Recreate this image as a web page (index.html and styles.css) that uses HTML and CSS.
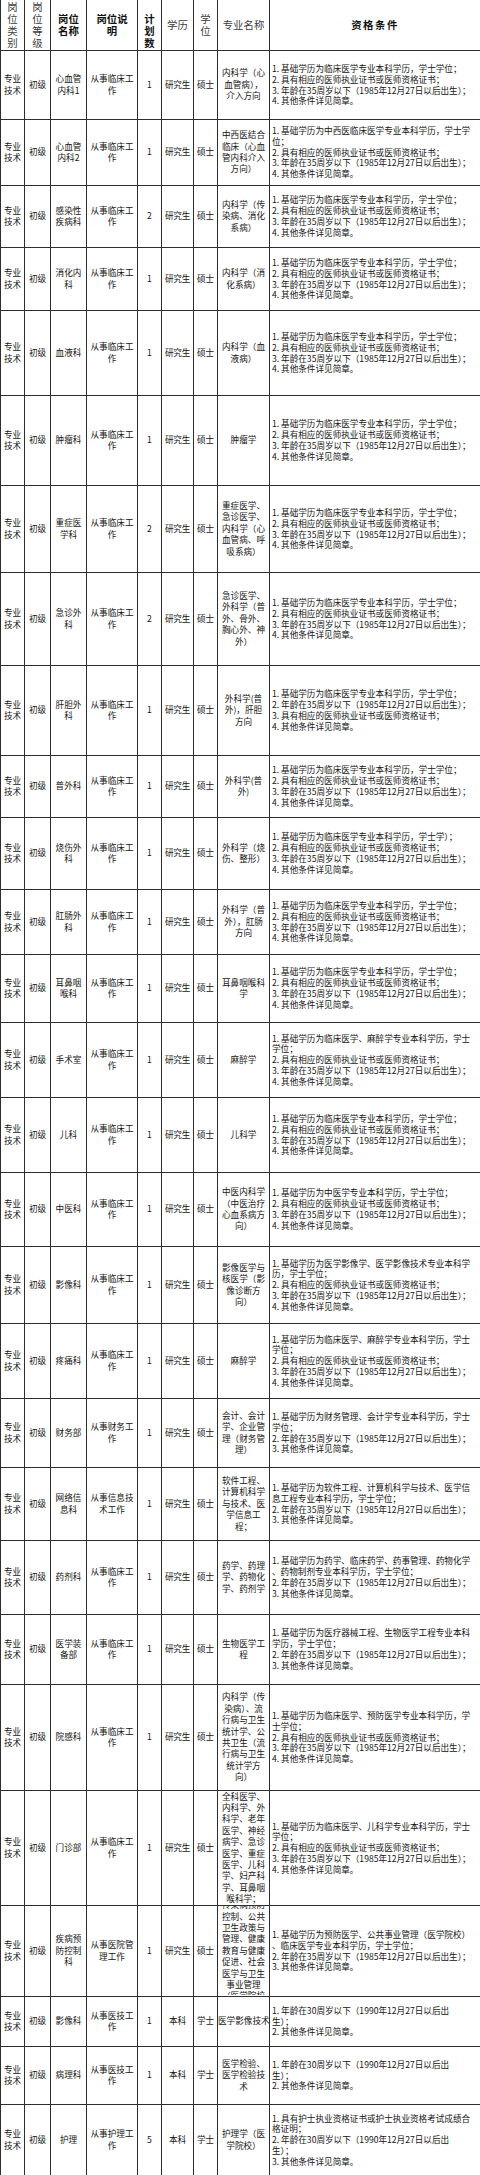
FILE: index.html
```html
<!DOCTYPE html>
<html lang="zh-CN">
<head>
<meta charset="utf-8">
<title>岗位表</title>
<link rel="stylesheet" href="styles.css">
</head>
<body>
<table class="sheet">
  <colgroup>
    <col class="w-type"><col class="w-level"><col class="w-name"><col class="w-desc"><col class="w-num"><col class="w-edu"><col class="w-deg"><col class="w-major"><col class="w-req">
  </colgroup>
  <thead>
    <tr class="r50">
      <th>岗<br>位<br>类<br>别</th>
      <th>岗<br>位<br>等<br>级</th>
      <th class="b">岗位<br>名称</th>
      <th class="b">岗位说<br>明</th>
      <th class="b low">计<br>划<br>数</th>
      <th>学历</th>
      <th>学<br>位</th>
      <th>专业名称</th>
      <th class="b wide">资格条件</th>
    </tr>
  </thead>
  <tbody>
    <tr class="r69">
      <td>专业<br>技术</td><td>初级</td><td>心血管<br>内科1</td><td>从事临床工<br>作</td><td>1</td><td class="edu">研究生</td><td>硕士</td>
      <td>内科学（心<br>血管病），<br>介入方向</td>
      <td class="req">1. 基础学历为临床医学专业本科学历，学士学位；<br>2. 具有相应的医师执业证书或医师资格证书；<br>3. 年龄在35周岁以下（1985年12月27日以后出生）；<br>4. 其他条件详见简章。</td>
    </tr>
    <tr class="r66">
      <td>专业<br>技术</td><td>初级</td><td>心血管<br>内科2</td><td>从事临床工<br>作</td><td>1</td><td class="edu">研究生</td><td>硕士</td>
      <td>中西医结合<br>临床（心血<br>管内科介入<br>方向）</td>
      <td class="req">1. 基础学历为中西医临床医学专业本科学历，学士学<br>位；<br>2. 具有相应的医师执业证书或医师资格证书；<br>3. 年龄在35周岁以下（1985年12月27日以后出生）；<br>4. 其他条件详见简章。</td>
    </tr>
    <tr class="r62">
      <td>专业<br>技术</td><td>初级</td><td>感染性<br>疾病科</td><td>从事临床工<br>作</td><td>2</td><td class="edu">研究生</td><td>硕士</td>
      <td>内科学（传<br>染病、消化<br>系病）</td>
      <td class="req">1. 基础学历为临床医学专业本科学历，学士学位；<br>2. 具有相应的医师执业证书或医师资格证书；<br>3. 年龄在35周岁以下（1985年12月27日以后出生）；<br>4. 其他条件详见简章。</td>
    </tr>
    <tr class="r63">
      <td>专业<br>技术</td><td>初级</td><td>消化内<br>科</td><td>从事临床工<br>作</td><td>1</td><td class="edu">研究生</td><td>硕士</td>
      <td>内科学（消<br>化系病）</td>
      <td class="req">1. 基础学历为临床医学专业本科学历，学士学位；<br>2. 具有相应的医师执业证书或医师资格证书；<br>3. 年龄在35周岁以下（1985年12月27日以后出生）；<br>4. 其他条件详见简章。</td>
    </tr>
    <tr class="r85">
      <td>专业<br>技术</td><td>初级</td><td>血液科</td><td>从事临床工<br>作</td><td>1</td><td class="edu">研究生</td><td>硕士</td>
      <td>内科学（血<br>液病）</td>
      <td class="req">1. 基础学历为临床医学专业本科学历，学士学位；<br>2. 具有相应的医师执业证书或医师资格证书；<br>3. 年龄在35周岁以下（1985年12月27日以后出生）；<br>4. 其他条件详见简章。</td>
    </tr>
    <tr class="r90">
      <td>专业<br>技术</td><td>初级</td><td>肿瘤科</td><td>从事临床工<br>作</td><td>1</td><td class="edu">研究生</td><td>硕士</td>
      <td>肿瘤学</td>
      <td class="req">1. 基础学历为临床医学专业本科学历，学士学位；<br>2. 具有相应的医师执业证书或医师资格证书；<br>3. 年龄在35周岁以下（1985年12月27日以后出生）；<br>4. 其他条件详见简章。</td>
    </tr>
    <tr class="r87">
      <td>专业<br>技术</td><td>初级</td><td>重症医<br>学科</td><td>从事临床工<br>作</td><td>2</td><td class="edu">研究生</td><td>硕士</td>
      <td>重症医学、<br>急诊医学、<br>内科学（心<br>血管病、呼<br>吸系病）</td>
      <td class="req">1. 基础学历为临床医学专业本科学历，学士学位；<br>2. 具有相应的医师执业证书或医师资格证书；<br>3. 年龄在35周岁以下（1985年12月27日以后出生）；<br>4. 其他条件详见简章。</td>
    </tr>
    <tr class="r93">
      <td>专业<br>技术</td><td>初级</td><td>急诊外<br>科</td><td>从事临床工<br>作</td><td>2</td><td class="edu">研究生</td><td>硕士</td>
      <td>急诊医学、<br>外科学（普<br>外、骨外、<br>胸心外、神<br>外）</td>
      <td class="req">1. 基础学历为临床医学专业本科学历，学士学位；<br>2. 具有相应的医师执业证书或医师资格证书；<br>3. 年龄在35周岁以下（1985年12月27日以后出生）；<br>4. 其他条件详见简章。</td>
    </tr>
    <tr class="r90">
      <td>专业<br>技术</td><td>初级</td><td>肝胆外<br>科</td><td>从事临床工<br>作</td><td>1</td><td class="edu">研究生</td><td>硕士</td>
      <td>外科学(普<br>外)，肝胆<br>方向</td>
      <td class="req">1. 基础学历为临床医学专业本科学历，学士学位；<br>2. 年龄在35周岁以下（1985年12月27日以后出生）；<br>3. 具有相应的医师执业证书或医师资格证书；<br>4. 其他条件详见简章。</td>
    </tr>
    <tr class="r62">
      <td>专业<br>技术</td><td>初级</td><td>普外科</td><td>从事临床工<br>作</td><td>1</td><td class="edu">研究生</td><td>硕士</td>
      <td>外科学(普<br>外)</td>
      <td class="req">1. 基础学历为临床医学专业本科学历，学士学位；<br>2. 具有相应的医师执业证书或医师资格证书；<br>3. 年龄在35周岁以下（1985年12月27日以后出生）；<br>4. 其他条件详见简章。</td>
    </tr>
    <tr class="r72">
      <td>专业<br>技术</td><td>初级</td><td>烧伤外<br>科</td><td>从事临床工<br>作</td><td>1</td><td class="edu">研究生</td><td>硕士</td>
      <td>外科学（烧<br>伤、整形）</td>
      <td class="req">1. 基础学历为临床医学专业本科学历，学士学）；<br>2. 具有相应的医师执业证书或医师资格证书；<br>3. 年龄在35周岁以下（1985年12月27日以后出生）；<br>4. 其他条件详见简章。</td>
    </tr>
    <tr class="r65">
      <td>专业<br>技术</td><td>初级</td><td>肛肠外<br>科</td><td>从事临床工<br>作</td><td>1</td><td class="edu">研究生</td><td>硕士</td>
      <td>外科学（普<br>外），肛肠<br>方向</td>
      <td class="req">1. 基础学历为临床医学专业本科学历，学士学位；<br>2. 具有相应的医师执业证书或医师资格证书；<br>3. 年龄在35周岁以下（1985年12月27日以后出生）；<br>4. 其他条件详见简章。</td>
    </tr>
    <tr class="r68">
      <td>专业<br>技术</td><td>初级</td><td>耳鼻咽<br>喉科</td><td>从事临床工<br>作</td><td>1</td><td class="edu">研究生</td><td>硕士</td>
      <td>耳鼻咽喉科<br>学</td>
      <td class="req">1. 基础学历为临床医学专业本科学历，学士学位；<br>2. 具有相应的医师执业证书或医师资格证书；<br>3. 年龄在35周岁以下（1985年12月27日以后出生）；<br>4. 其他条件详见简章。</td>
    </tr>
    <tr class="r75">
      <td>专业<br>技术</td><td>初级</td><td>手术室</td><td>从事临床工<br>作</td><td>1</td><td class="edu">研究生</td><td>硕士</td>
      <td>麻醉学</td>
      <td class="req">1. 基础学历为临床医学、麻醉学专业本科学历，学士<br>学位；<br>2. 具有相应的医师执业证书或医师资格证书；<br>3. 年龄在35周岁以下（1985年12月27日以后出生）；<br>4. 其他条件详见简章。</td>
    </tr>
    <tr class="r75">
      <td>专业<br>技术</td><td>初级</td><td>儿科</td><td>从事临床工<br>作</td><td>1</td><td class="edu">研究生</td><td>硕士</td>
      <td>儿科学</td>
      <td class="req">1. 基础学历为临床医学专业本科学历，学士学位；<br>2. 具有相应的医师执业证书或医师资格证书；<br>3. 年龄在35周岁以下（1985年12月27日以后出生）；<br>4. 其他条件详见简章。</td>
    </tr>
    <tr class="r74">
      <td>专业<br>技术</td><td>初级</td><td>中医科</td><td>从事临床工<br>作</td><td>1</td><td class="edu">研究生</td><td>硕士</td>
      <td>中医内科学<br>（中医治疗<br>心血系病方<br>向）</td>
      <td class="req">1. 基础学历为中医学专业本科学历，学士学位；<br>2. 具有相应的医师执业证书或医师资格证书；<br>3. 年龄在35周岁以下（1985年12月27日以后出生）；<br>4. 其他条件详见简章。</td>
    </tr>
    <tr class="r77">
      <td>专业<br>技术</td><td>初级</td><td>影像科</td><td>从事临床工<br>作</td><td>1</td><td class="edu">研究生</td><td>硕士</td>
      <td>影像医学与<br>核医学（影<br>像诊断方<br>向）</td>
      <td class="req">1. 基础学历为医学影像学、医学影像技术专业本科学<br>历，学士学位；<br>2. 具有相应的医师执业证书或医师资格证书；<br>3. 年龄在35周岁以下（1985年12月27日以后出生）；<br>4. 其他条件详见简章。</td>
    </tr>
    <tr class="r75">
      <td>专业<br>技术</td><td>初级</td><td>疼痛科</td><td>从事临床工<br>作</td><td>1</td><td class="edu">研究生</td><td>硕士</td>
      <td>麻醉学</td>
      <td class="req">1. 基础学历为临床医学、麻醉学专业本科学历，学士<br>学位；<br>2. 具有相应的医师执业证书或医师资格证书；<br>3. 年龄在35周岁以下（1985年12月27日以后出生）；<br>4. 其他条件详见简章。</td>
    </tr>
    <tr class="r69">
      <td>专业<br>技术</td><td>初级</td><td>财务部</td><td>从事财务工<br>作</td><td>1</td><td class="edu">研究生</td><td>硕士</td>
      <td>会计、会计<br>学、企业管<br>理（财务管<br>理）</td>
      <td class="req">1. 基础学历为财务管理、会计学专业本科学历，学士<br>学位；<br>2. 年龄在35周岁以下（1985年12月27日以后出生）；<br>3. 其他条件详见简章。</td>
    </tr>
    <tr class="r73">
      <td>专业<br>技术</td><td>初级</td><td>网络信<br>息科</td><td>从事信息技<br>术工作</td><td>1</td><td class="edu">研究生</td><td>硕士</td>
      <td>软件工程、<br>计算机科学<br>与技术、医<br>学信息工<br>程；</td>
      <td class="req">1. 基础学历为软件工程、计算机科学与技术、医学信<br>息工程专业本科学历，学士学位；<br>2. 年龄在35周岁以下（1985年12月27日以后出生）；<br>3. 其他条件详见简章。</td>
    </tr>
    <tr class="r74">
      <td>专业<br>技术</td><td>初级</td><td>药剂科</td><td>从事临床工<br>作</td><td>1</td><td class="edu">研究生</td><td>硕士</td>
      <td>药学、药理<br>学、药物化<br>学、药剂学</td>
      <td class="req">1. 基础学历为药学、临床药学、药事管理、药物化学<br>、药物制剂专业本科学历，学士学位；<br>2. 年龄在35周岁以下（1985年12月27日以后出生）；<br>3. 其他条件详见简章。</td>
    </tr>
    <tr class="r70">
      <td>专业<br>技术</td><td>初级</td><td>医学装<br>备部</td><td>从事临床工<br>作</td><td>1</td><td class="edu">研究生</td><td>硕士</td>
      <td>生物医学工<br>程</td>
      <td class="req">1. 基础学历为医疗器械工程、生物医学工程专业本科<br>学历，学士学位；<br>2. 年龄在35周岁以下（1985年12月27日以后出生）；<br>3. 其他条件详见简章。</td>
    </tr>
    <tr class="r106">
      <td>专业<br>技术</td><td>初级</td><td>院感科</td><td>从事临床工<br>作</td><td>1</td><td class="edu">研究生</td><td>硕士</td>
      <td>内科学（传<br>染病）、流<br>行病与卫生<br>统计学、公<br>共卫生（流<br>行病与卫生<br>统计学方<br>向）</td>
      <td class="req">1. 基础学历为临床医学、预防医学专业本科学历，学<br>士学位；<br>2. 具有相应的医师执业证书或医师资格证书；<br>3. 年龄在35周岁以下（1985年12月27日以后出生）；<br>4. 其他条件详见简章。</td>
    </tr>
    <tr class="r114">
      <td>专业<br>技术</td><td>初级</td><td>门诊部</td><td>从事临床工<br>作</td><td>1</td><td class="edu">研究生</td><td>硕士</td>
      <td>全科医学、<br>内科学、外<br>科学、老年<br>医学、神经<br>病学、急诊<br>医学、重症<br>医学、儿科<br>学、妇产科<br>学、耳鼻咽<br>喉科学；</td>
      <td class="req">1. 基础学历为临床医学、儿科学专业本科学历，学士<br>学位；<br>2. 具有相应的医师执业证书或医师资格证书；<br>3. 年龄在35周岁以下（1985年12月27日以后出生）；<br>4. 其他条件详见简章。</td>
    </tr>
    <tr class="r91">
      <td>专业<br>技术</td><td>初级</td><td>疾病预<br>防控制<br>科</td><td>从事医院管<br>理工作</td><td>1</td><td class="edu">研究生</td><td>硕士</td>
      <td><div class="clip"><div>传染病预防<br>控制、公共<br>卫生政策与<br>管理、健康<br>教育与健康<br>促进、社会<br>医学与卫生<br>事业管理<br>（医学院校</div></div></td>
      <td class="req">1. 基础学历为预防医学、公共事业管理（医学院校）<br>、临床医学专业本科学历，学士学位；<br>2. 年龄在35周岁以下（1985年12月27日以后出生）；<br>3. 其他条件详见简章。</td>
    </tr>
    <tr class="r50">
      <td>专业<br>技术</td><td>初级</td><td>影像科</td><td>从事医技工<br>作</td><td>1</td><td class="edu">本科</td><td>学士</td>
      <td>医学影像技术</td>
      <td class="req">1. 年龄在30周岁以下（1990年12月27日以后出<br>生）；<br>2. 其他条件详见简章。</td>
    </tr>
    <tr class="r58">
      <td>专业<br>技术</td><td>初级</td><td>病理科</td><td>从事医技工<br>作</td><td>1</td><td class="edu">本科</td><td>学士</td>
      <td>医学检验、<br>医学检验技<br>术</td>
      <td class="req">1. 年龄在30周岁以下（1990年12月27日以后出<br>生）；<br>2. 其他条件详见简章。</td>
    </tr>
    <tr class="r71">
      <td>专业<br>技术</td><td>初级</td><td>护理</td><td>从事护理工<br>作</td><td>5</td><td class="edu">本科</td><td>学士</td>
      <td>护理学（医<br>学院校）</td>
      <td class="req">1. 具有护士执业资格证书或护士执业资格考试成绩合<br>格证明；<br>2. 年龄在30周岁以下（1990年12月27日以后出<br>生）；<br>3. 其他条件详见简章。</td>
    </tr>
  </tbody>
</table>
</body>
</html>
```

FILE: styles.css
```css
html, body {
  margin: 0;
  padding: 0;
  background: #ffffff;
}

.sheet {
  width: 480px;
  border-collapse: collapse;
  table-layout: fixed;
  font-family: "Noto Sans CJK SC", "Noto Sans", sans-serif;
  color: #151515;
  font-size: 8.6px;
}

.w-type { width: 24px; }
.w-level { width: 26px; }
.w-name { width: 36px; }
.w-desc { width: 51px; }
.w-num { width: 24px; }
.w-edu { width: 32px; }
.w-deg { width: 24px; }
.w-major { width: 52px; }
.w-req { width: 211px; }

.sheet th,
.sheet td {
  border: 1px solid #2e2e2e;
  padding: 0;
  text-align: center;
  vertical-align: middle;
  white-space: nowrap;
  line-height: 11.4px;
}

.sheet td.edu {
  letter-spacing: -0.2px;
}

.sheet thead th {
  border-top: none;
  font-size: 10.4px;
  line-height: 12px;
  font-weight: normal;
  color: #3c3c3c;
}

.sheet thead th.b {
  font-weight: bold;
  color: #111111;
}

.sheet thead th.low {
  vertical-align: bottom;
  padding-bottom: 1px;
}

.sheet thead th.wide {
  letter-spacing: 1.5px;
}

.sheet td.req {
  text-align: left;
  padding-left: 2px;
  line-height: 10.8px;
}

.clip {
  height: 89px;
  overflow: hidden;
  display: flex;
  flex-direction: column;
  justify-content: center;
}

.r50 { height: 50px; }
.r58 { height: 58px; }
.r62 { height: 62px; }
.r63 { height: 63px; }
.r65 { height: 65px; }
.r66 { height: 66px; }
.r68 { height: 68px; }
.r69 { height: 69px; }
.r70 { height: 70px; }
.r71 { height: 71px; }
.r72 { height: 72px; }
.r73 { height: 73px; }
.r74 { height: 74px; }
.r75 { height: 75px; }
.r77 { height: 77px; }
.r85 { height: 85px; }
.r87 { height: 87px; }
.r90 { height: 90px; }
.r91 { height: 91px; }
.r93 { height: 93px; }
.r106 { height: 106px; }
.r114 { height: 114px; }
```
